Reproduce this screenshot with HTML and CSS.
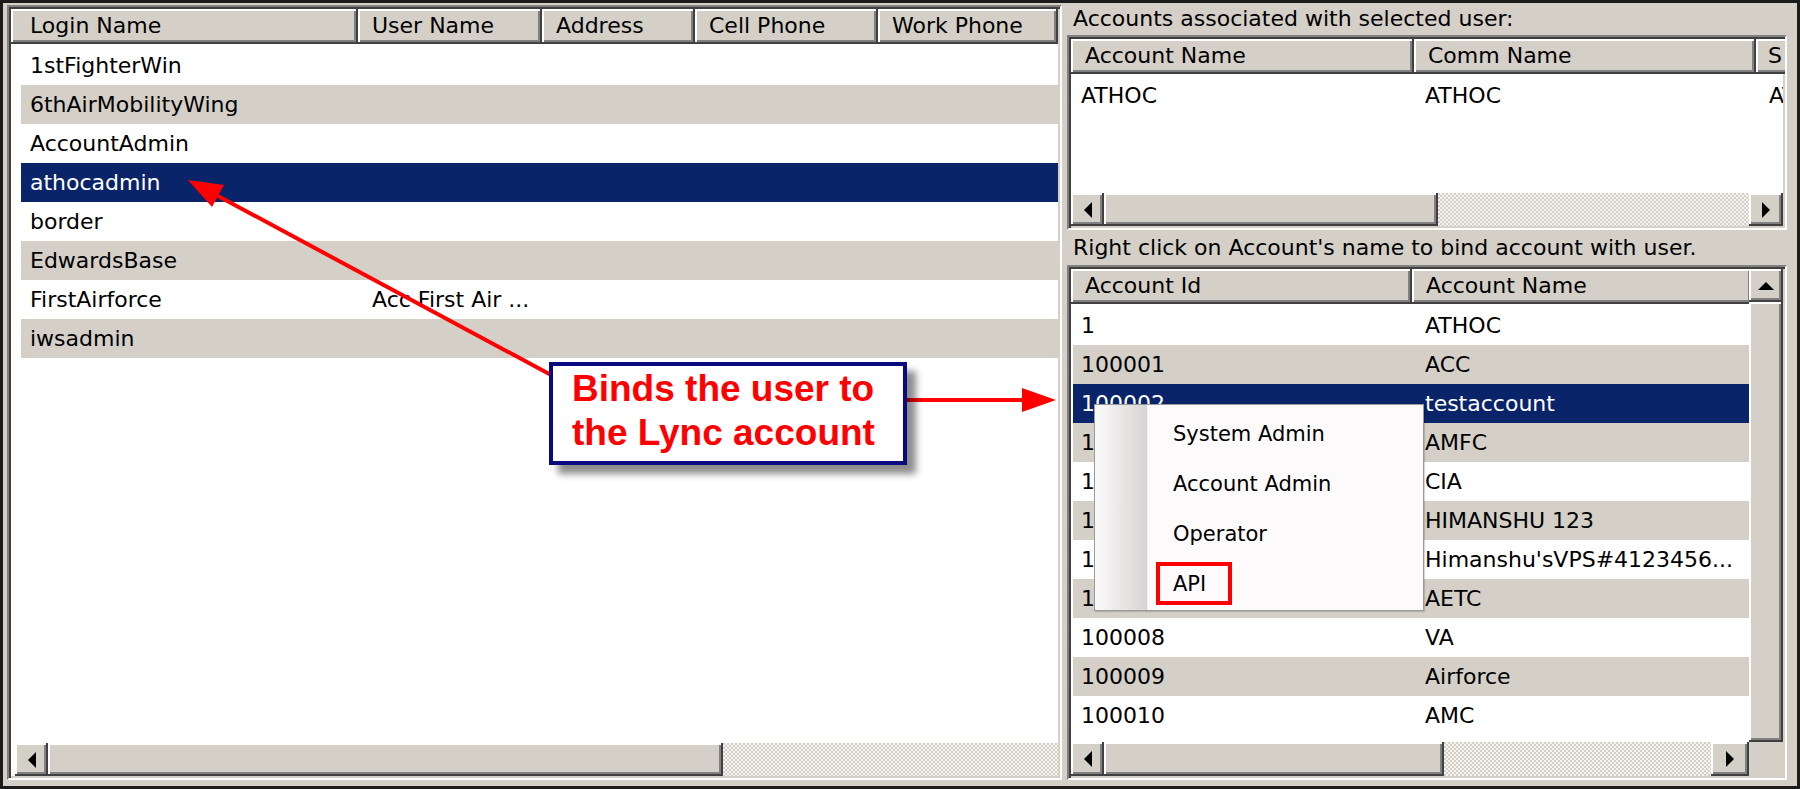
FILE: index.html
```html
<!DOCTYPE html>
<html>
<head>
<meta charset="utf-8">
<title>User account binding</title>
<link rel="stylesheet" href="styles.css">
</head>
<body>
<div class="screen">
  <section class="lv lv-users">
    <div class="lv-head">
      <div class="hc hc-login">Login Name</div>
      <div class="hc hc-user">User Name</div>
      <div class="hc hc-addr">Address</div>
      <div class="hc hc-cell">Cell Phone</div>
      <div class="hc hc-work">Work Phone</div>
    </div>
    <div class="rows users">
      <div class="row"><span>1stFighterWin</span><span></span></div>
      <div class="row alt"><span>6thAirMobilityWing</span><span></span></div>
      <div class="row"><span>AccountAdmin</span><span></span></div>
      <div class="row sel"><span>athocadmin</span><span></span></div>
      <div class="row"><span>border</span><span></span></div>
      <div class="row alt"><span>EdwardsBase</span><span></span></div>
      <div class="row"><span>FirstAirforce</span><span>Acc First Air ...</span></div>
      <div class="row alt"><span>iwsadmin</span><span></span></div>
    </div>
    <div class="hscroll hs-users">
      <div class="sbtn"><svg width="10" height="16" viewBox="0 0 10 16"><polygon points="9,0 9,16 1,8" fill="#000"/></svg></div>
      <div class="thumb"></div>
      <div class="track"></div>
    </div>
  </section>

  <section class="side">
    <div class="caption">Accounts associated with selected user:</div>
    <div class="lv lv-assoc">
      <div class="lv-head">
        <div class="hc hc-aname">Account Name</div>
        <div class="hc hc-comm">Comm Name</div>
        <div class="hc hc-s">S</div>
      </div>
      <div class="rows assoc">
        <div class="row"><span>ATHOC</span><span>ATHOC</span><span>ATHOC</span></div>
      </div>
      <div class="hscroll hs-assoc">
        <div class="sbtn"><svg width="10" height="16" viewBox="0 0 10 16"><polygon points="9,0 9,16 1,8" fill="#000"/></svg></div>
        <div class="thumb"></div>
        <div class="track"></div>
        <div class="sbtn sbtn-r"><svg width="10" height="16" viewBox="0 0 10 16"><polygon points="1,0 1,16 9,8" fill="#000"/></svg></div>
      </div>
    </div>
    <div class="caption caption-2">Right click on Account's name to bind account with user.</div>
    <div class="lv lv-accounts">
      <div class="acc-main">
        <div class="lv-head">
          <div class="hc hc-aid">Account Id</div>
          <div class="hc hc-aname2">Account Name</div>
        </div>
        <div class="rows accounts">
          <div class="row"><span>1</span><span>ATHOC</span></div>
          <div class="row alt"><span>100001</span><span>ACC</span></div>
          <div class="row sel"><span>100002</span><span>testaccount</span></div>
          <div class="row alt"><span>100003</span><span>AMFC</span></div>
          <div class="row"><span>100004</span><span>CIA</span></div>
          <div class="row alt"><span>100005</span><span>HIMANSHU 123</span></div>
          <div class="row"><span>100006</span><span>Himanshu'sVPS#4123456...</span></div>
          <div class="row alt"><span>100007</span><span>AETC</span></div>
          <div class="row"><span>100008</span><span>VA</span></div>
          <div class="row alt"><span>100009</span><span>Airforce</span></div>
          <div class="row"><span>100010</span><span>AMC</span></div>
        </div>
      </div>
      <div class="vscroll">
        <div class="sbtn sbtn-up"><svg width="16" height="10" viewBox="0 0 16 10"><polygon points="0,9 16,9 8,1" fill="#000"/></svg></div>
        <div class="vthumb"></div>
      </div>
      <div class="hscroll hs-accounts">
        <div class="sbtn"><svg width="10" height="16" viewBox="0 0 10 16"><polygon points="9,0 9,16 1,8" fill="#000"/></svg></div>
        <div class="thumb"></div>
        <div class="track"></div>
        <div class="sbtn sbtn-r2"><svg width="10" height="16" viewBox="0 0 10 16"><polygon points="1,0 1,16 9,8" fill="#000"/></svg></div>
      </div>
      <div class="corner"></div>
    </div>
  </section>

  <svg class="arrows" width="1800" height="789" viewBox="0 0 1800 789">
    <line x1="553" y1="376" x2="218" y2="196" stroke="#ff0000" stroke-width="4"/>
    <polygon points="188,180 224,185 212,207" fill="#ff0000"/>
    <line x1="907" y1="400" x2="1024" y2="400" stroke="#ff0000" stroke-width="4"/>
    <polygon points="1056,400 1022,388 1022,412" fill="#ff0000"/>
  </svg>

  <div class="callout">
    <p>Binds the user to</p>
    <p>the Lync account</p>
  </div>

  <div class="menu">
    <div class="menu-strip"></div>
    <ul class="menu-items">
      <li>System Admin</li>
      <li>Account Admin</li>
      <li>Operator</li>
      <li class="api">API<span class="api-box"></span></li>
    </ul>
  </div>
</div>
</body>
</html>
```

FILE: styles.css
```css
html, body {
  margin: 0;
  padding: 0;
  overflow: hidden;
  background: #d4d0c8;
}

.screen {
  position: relative;
  box-sizing: border-box;
  width: 1800px;
  height: 789px;
  border: 3px solid #1b1b1b;
  padding: 2px 0 6px 4px;
  background: #d4d0c8;
  display: flex;
  font-family: "DejaVu Sans", Tahoma, sans-serif;
  font-size: 22px;
  color: #000;
}

/* sunken list view */
.lv {
  box-sizing: border-box;
  border: 2px solid;
  border-color: #808080 #ffffff #ffffff #808080;
  padding: 2px;
  box-shadow: inset 2px 2px 0 #404040, inset -2px -2px 0 #d4d0c8;
  background: #fff;
  display: flex;
  flex-direction: column;
  overflow: hidden;
}

.lv-users {
  width: 1055px;
  flex: none;
}

.lv-head {
  display: flex;
  height: 35px;
  flex: none;
}

.hc {
  box-sizing: border-box;
  background: #d4d0c8;
  height: 100%;
  padding-left: 14px;
  line-height: 33px;
  white-space: nowrap;
  overflow: hidden;
  border-right: 2px solid #404040;
  border-bottom: 2px solid #404040;
  box-shadow: inset 2px 2px 0 #fff, inset -2px -2px 0 #808080;
  flex: none;
}

.hc-login { width: 347px; padding-left: 19px; }
.hc-user { width: 184px; }
.hc-addr { width: 153px; }
.hc-cell { width: 183px; }
.hc-work { width: 180px; }

.rows {
  flex: 1;
  padding-top: 2px;
}

.row {
  display: grid;
  height: 39px;
  align-items: center;
  white-space: nowrap;
  overflow: hidden;
}

.row span {
  overflow: hidden;
}

.row.alt { background: #d4d0c8; }
.row.sel { background: #0a246a; color: #fff; }

.users .row {
  margin-left: 10px;
  grid-template-columns: 337px 184px 153px 183px 180px;
}
.users .row span:first-child { padding-left: 9px; }
.users .row span:nth-child(2) { padding-left: 14px; }

/* scrollbars */
.hscroll {
  display: flex;
  height: 33px;
  flex: none;
}

.sbtn {
  box-sizing: border-box;
  width: 33px;
  flex: none;
  background: #d4d0c8;
  box-shadow: inset -2px -2px 0 #404040, inset 2px 2px 0 #fff, inset -4px -4px 0 #808080;
  display: flex;
  align-items: center;
  justify-content: center;
}

.sbtn svg { display: block; }

.thumb {
  flex: none;
  background: #d4d0c8;
  box-shadow: inset -2px -2px 0 #404040, inset 2px 2px 0 #fff, inset -4px -4px 0 #808080;
}

.track {
  flex: 1;
  background-color: #d4d0c8;
  background-image: repeating-conic-gradient(#f4f3f0 0 25%, #d4d0c8 0 50%);
  background-size: 4px 4px;
}

.hs-users { margin: 0 0 0 4px; }
.hs-users .thumb { width: 675px; }

/* right side */
.side {
  flex: 1;
  display: flex;
  flex-direction: column;
  padding: 0 10px 0 5px;
  min-width: 0;
}

.caption {
  height: 30px;
  line-height: 28px;
  padding-left: 6px;
  white-space: nowrap;
  flex: none;
}

.caption-2 {
  height: 35px;
  line-height: 36px;
}

.lv-assoc {
  height: 195px;
  flex: none;
}

.hc-aname { width: 343px; }
.hc-comm { width: 342px; }
.hc-s { width: 120px; padding-left: 12px; }

.assoc .row {
  grid-template-columns: 343px 342px 120px;
}
.assoc .row span:first-child { padding-left: 10px; }
.assoc .row span:nth-child(2) { padding-left: 11px; }
.assoc .row span:nth-child(3) { padding-left: 13px; }

.hs-assoc .thumb { width: 334px; }
.sbtn-r { width: 34px; }

.lv-accounts {
  flex: 1;
  display: grid;
  grid-template-columns: 1fr 34px;
  grid-template-rows: 1fr 34px;
}

.acc-main {
  display: flex;
  flex-direction: column;
  min-width: 0;
  overflow: hidden;
}

.hc-aid { width: 341px; }
.hc-aname2 { width: 340px; }

.accounts .row {
  margin-left: 2px;
  grid-template-columns: 339px 340px;
}
.accounts .row span:first-child { padding-left: 8px; }
.accounts .row span:nth-child(2) { padding-left: 13px; }

.vscroll {
  display: flex;
  flex-direction: column;
}

.sbtn-up {
  width: 34px;
  height: 33px;
}

.vthumb {
  flex: 1;
  background: #d4d0c8;
  box-shadow: inset -2px -2px 0 #404040, inset 2px 2px 0 #fff, inset -4px -4px 0 #808080;
}

.hs-accounts { height: 34px; }
.hs-accounts .thumb { width: 340px; }
.sbtn-r2 { width: 38px; }

.corner { background: #d4d0c8; }

/* annotations */
.arrows {
  position: absolute;
  left: -3px;
  top: -3px;
}

.callout {
  position: absolute;
  left: 546px;
  top: 359px;
  width: 358px;
  height: 103px;
  box-sizing: border-box;
  background: #fff;
  border: 4px solid #0a0a80;
  box-shadow: 9px 9px 7px rgba(0, 0, 0, 0.45);
  padding: 1px 0 0 19px;
  font-family: "Liberation Sans", Arial, sans-serif;
  font-weight: bold;
  font-size: 37px;
  line-height: 44px;
  color: #ff0000;
}

.callout p {
  margin: 0;
  white-space: nowrap;
}

.menu {
  position: absolute;
  left: 1091px;
  top: 401px;
  width: 330px;
  height: 207px;
  box-sizing: border-box;
  border: 1px solid #9a9a9a;
  background: #fcfafb;
  display: flex;
  font-size: 21px;
  box-shadow: 1px 1px 1px rgba(0, 0, 0, 0.15);
}

.menu-strip {
  width: 52px;
  flex: none;
  background: linear-gradient(to right, #fbfafa, #d8d4d3);
  border-right: 1px solid #f4f2f2;
}

.menu-items {
  list-style: none;
  margin: 0;
  padding: 4px 0 0 25px;
}

.menu-items li {
  position: relative;
  height: 50px;
  line-height: 50px;
  white-space: nowrap;
}

.api-box {
  position: absolute;
  left: -17px;
  top: 3px;
  width: 76px;
  height: 43px;
  box-sizing: border-box;
  border: 4px solid #ff0000;
}
```
